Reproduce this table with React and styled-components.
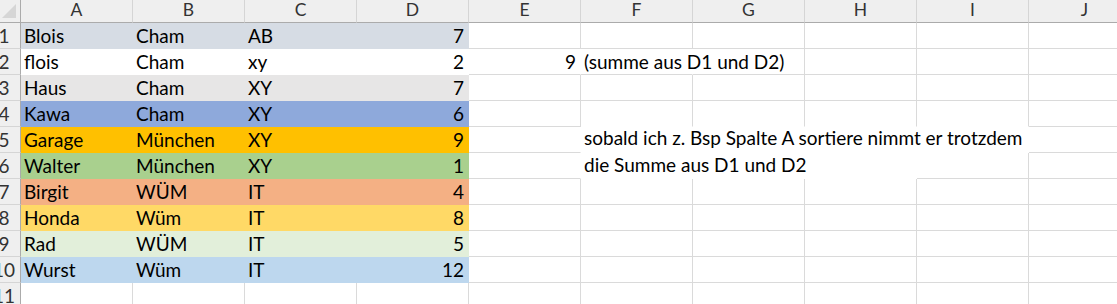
import React from 'react';
import styled, { createGlobalStyle } from 'styled-components';

const Global = createGlobalStyle`
  html, body { margin: 0; padding: 0; background: #ffffff; }
  body { overflow: hidden; }
`;

const GRID = '#DADADA';
const HEAD_BG = '#EFEFEF';
const HEAD_LINE = '#D5D5D5';
const HEAD_EDGE = '#ABABAB';

const Viewport = styled.div`
  width: 1117px;
  height: 304px;
  overflow: hidden;
  background: #fff;
`;

const Sheet = styled.div`
  display: grid;
  grid-template-columns: 21px repeat(10, 112px);
  grid-template-rows: 23px repeat(11, 26px);
  font-family: Lato, 'Liberation Sans', sans-serif;
  font-size: 19px;
  color: #000;
`;

const Corner = styled.div`
  box-sizing: border-box;
  background: ${HEAD_BG};
  border-right: 1px solid ${HEAD_EDGE};
  border-bottom: 1px solid ${HEAD_EDGE};
  display: flex;
  align-items: flex-end;
  justify-content: flex-end;
  padding: 0 4px 4px 0;
`;

const SelectAll = styled.div`
  width: 14px;
  height: 14px;
  background: #D6D6D6;
  clip-path: polygon(100% 0, 100% 100%, 0 100%);
`;

const ColHead = styled.div`
  box-sizing: border-box;
  background: ${HEAD_BG};
  border-right: 1px solid ${HEAD_LINE};
  border-bottom: 1px solid ${HEAD_EDGE};
  display: flex;
  align-items: flex-start;
  justify-content: center;
  color: #333;
  font-size: 17.5px;
  line-height: 20px;
`;

const RowHead = styled.div`
  box-sizing: border-box;
  background: ${HEAD_BG};
  border-right: 1px solid ${HEAD_EDGE};
  border-bottom: 1px solid ${HEAD_LINE};
  display: flex;
  align-items: flex-end;
  justify-content: center;
  padding: 0 12px 1px 0;
  line-height: 22px;
  color: #333;
  white-space: nowrap;
`;

const Cell = styled.div`
  box-sizing: border-box;
  min-width: 0;
  background: ${p => p.$bg || 'transparent'};
  border-right: 1px solid ${p => (p.$noRight ? p.$bg || 'transparent' : GRID)};
  border-bottom: 1px solid ${p => (p.$noBottom ? p.$bg || 'transparent' : GRID)};
  display: flex;
  align-items: flex-end;
  justify-content: ${p => (p.$num ? 'flex-end' : 'flex-start')};
  padding: 0 4px 1px 3px;
  line-height: 22px;
  white-space: nowrap;
  overflow: visible;
`;

const Merged = styled.div`
  grid-column: span 3;
  grid-row: span 2;
  background: #fff;
  display: flex;
  flex-direction: column;
  justify-content: flex-end;
  padding: 0 0 1px 3px;
  line-height: 27px;
  white-space: nowrap;
  overflow: visible;
`;

const fills = [
  '#D6DCE4', '#FFFFFF', '#E7E6E6', '#8EA9DB', '#FFC000',
  '#A9D08E', '#F4B084', '#FFD966', '#E2EFDA', '#BDD7EE',
];

const data = [
  ['Blois', 'Cham', 'AB', 7],
  ['flois', 'Cham', 'xy', 2],
  ['Haus', 'Cham', 'XY', 7],
  ['Kawa', 'Cham', 'XY', 6],
  ['Garage', 'München', 'XY', 9],
  ['Walter', 'München', 'XY', 1],
  ['Birgit', 'WÜM', 'IT', 4],
  ['Honda', 'Wüm', 'IT', 8],
  ['Rad', 'WÜM', 'IT', 5],
  ['Wurst', 'Wüm', 'IT', 12],
];

const cols = ['A', 'B', 'C', 'D', 'E', 'F', 'G', 'H', 'I', 'J'];

// filled cells (hide their gridlines): table A1:D10, plus white F5:I5, F6:H6
const isFilled = (r, c) => {
  if (r >= 1 && r <= 10 && c >= 0 && c <= 3) return true;
  if (r === 5 && c >= 5 && c <= 8) return true;
  if (r === 6 && c >= 5 && c <= 7) return true;
  return false;
};

// text overflow in row 2 hides the E|F and F|G lines
const overflowRight = (r, c) => r === 2 && (c === 4 || c === 5);

const extra = {
  '2-4': { text: '9', num: true },
  '2-5': { text: '(summe aus D1 und D2)' },
};

function renderRow(r) {
  const items = [<RowHead key="h">{r}</RowHead>];
  for (let c = 0; c < 10; c++) {
    if (r === 5 && c === 5) {
      items.push(
        <Merged key={c}>
          <span>sobald ich z. Bsp Spalte A sortiere nimmt er trotzdem</span>
          <span>die Summe aus D1 und D2</span>
        </Merged>
      );
      c = 7;
      continue;
    }
    if (r === 6 && c >= 5 && c <= 7) continue;
    let text = '';
    let num = false;
    let bg;
    if (r <= 10 && c <= 3) {
      const v = data[r - 1][c];
      text = String(v);
      num = c === 3;
      bg = fills[r - 1];
    } else if (extra[`${r}-${c}`]) {
      text = extra[`${r}-${c}`].text;
      num = !!extra[`${r}-${c}`].num;
    }
    const noRight = isFilled(r, c) || isFilled(r, c + 1) || overflowRight(r, c);
    const noBottom = isFilled(r, c) || isFilled(r + 1, c);
    items.push(
      <Cell key={c} $bg={bg} $num={num} $noRight={noRight} $noBottom={noBottom}>
        {text}
      </Cell>
    );
  }
  return items;
}

export default function App() {
  const rows = [];
  for (let r = 1; r <= 11; r++) rows.push(...renderRow(r));
  return (
    <>
      <Global />
      <Viewport>
        <Sheet>
          <Corner>
            <SelectAll />
          </Corner>
          {cols.map(c => (
            <ColHead key={c}>{c}</ColHead>
          ))}
          {rows}
        </Sheet>
      </Viewport>
    </>
  );
}
